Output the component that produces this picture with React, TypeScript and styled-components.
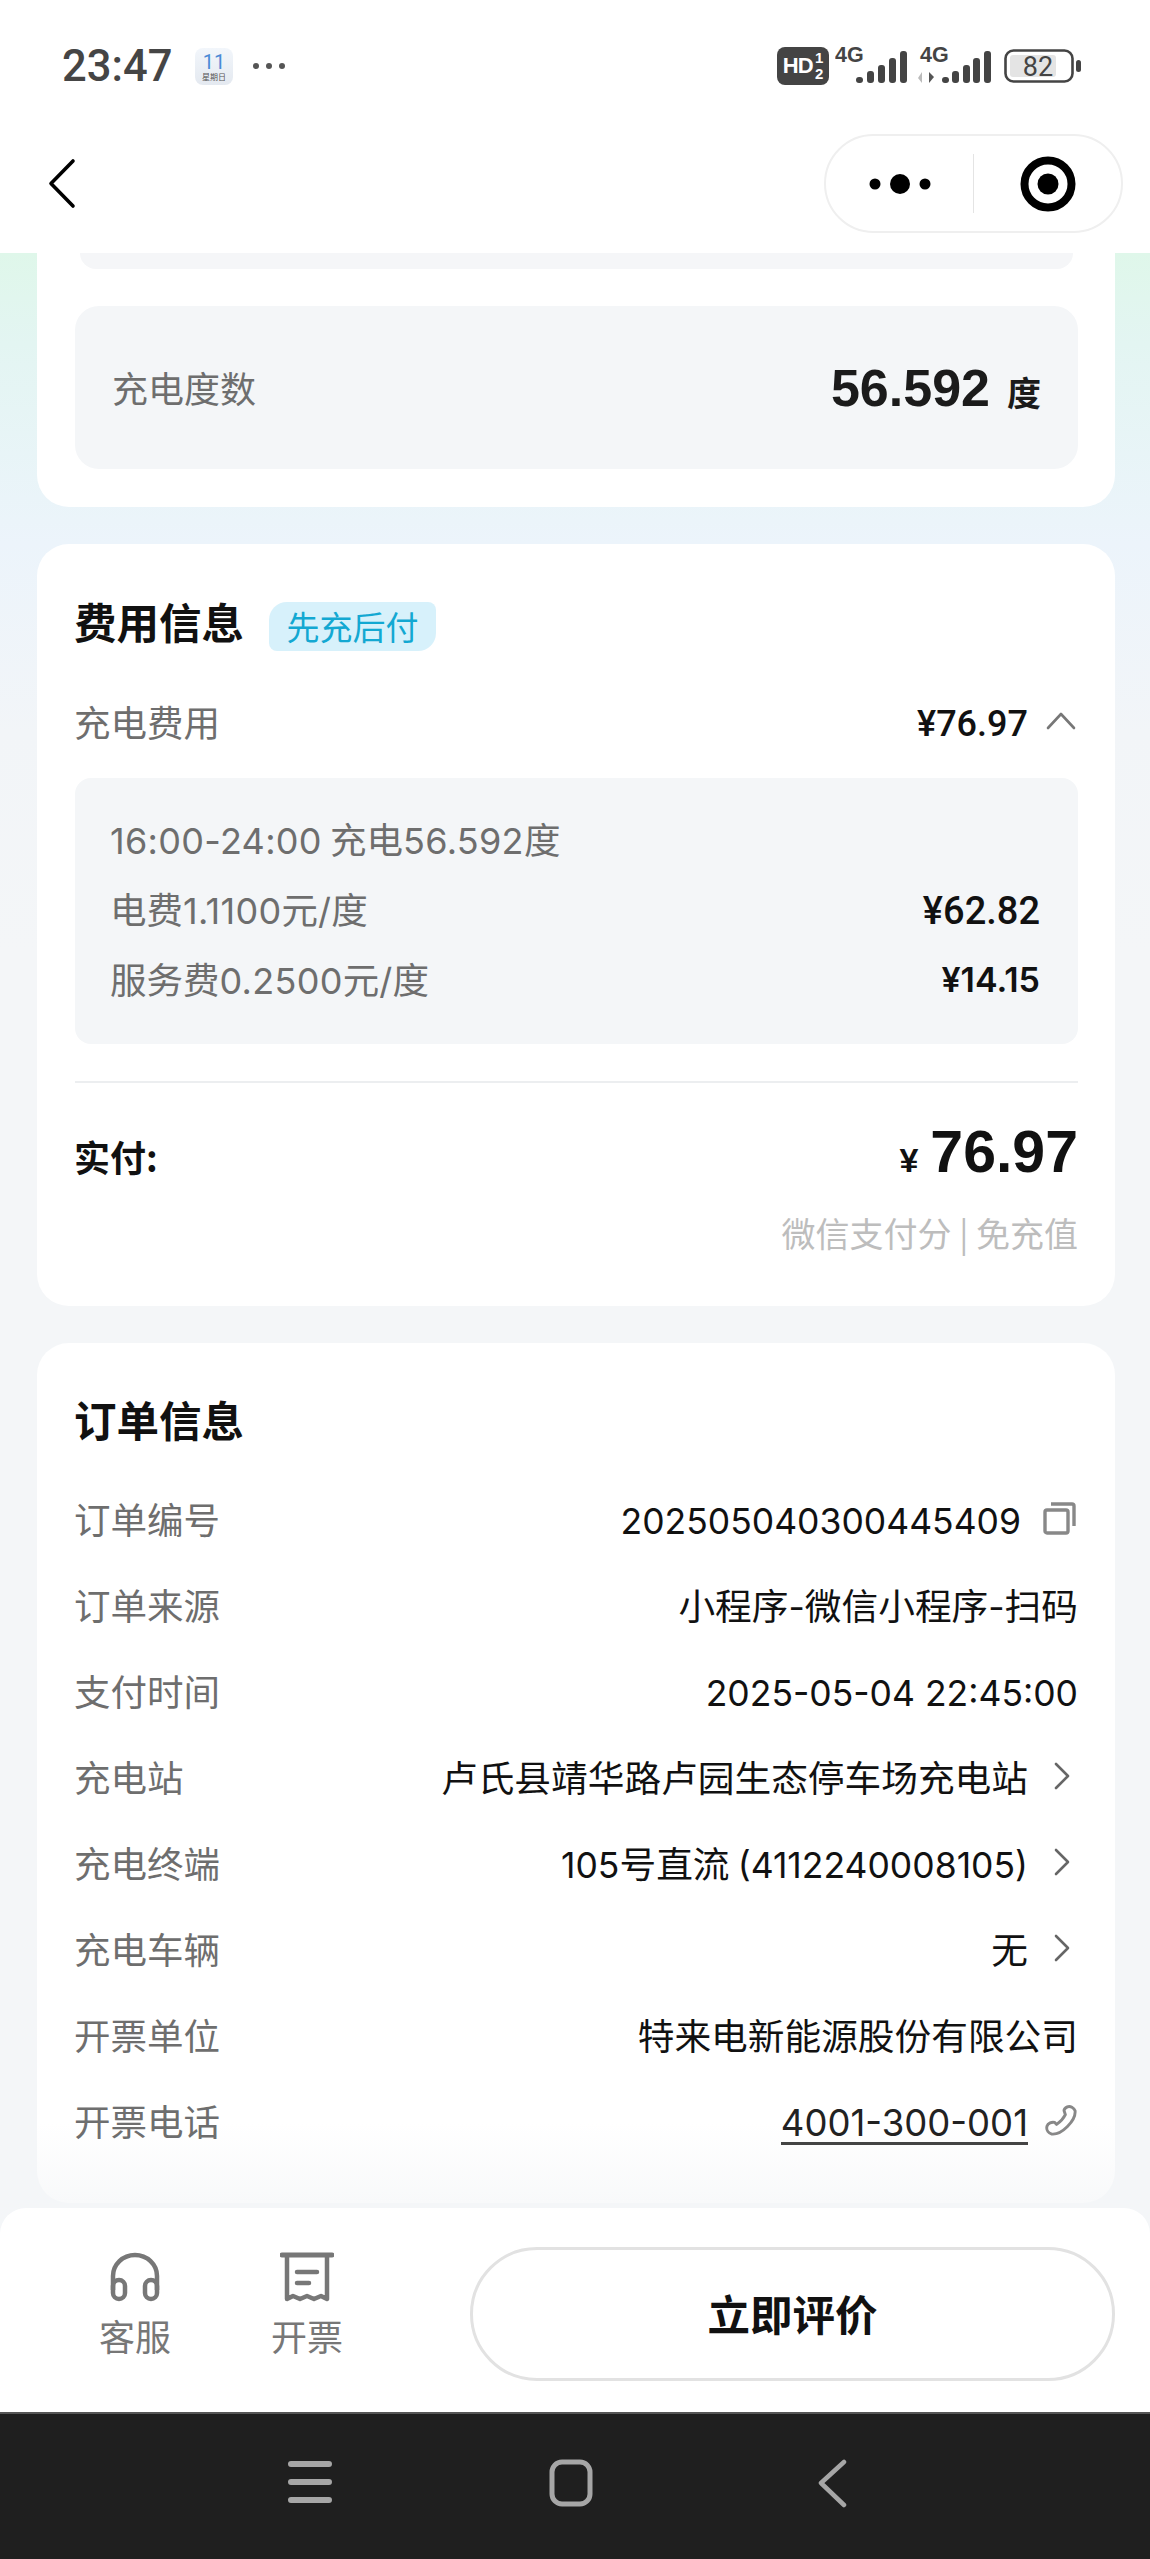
import React from "react";
import styled, { createGlobalStyle } from "styled-components";

const CJK = `"Noto Sans CJK SC", "Noto Sans", sans-serif`;
const NUM = `Inter, Roboto, "Noto Sans CJK SC", sans-serif`;
const MONEY = `Roboto, "Noto Sans CJK SC", sans-serif`;
const HEAVY = `"Liberation Sans", Roboto, "Noto Sans CJK SC", sans-serif`;

const Global = createGlobalStyle`
  html, body { margin: 0; padding: 0; background: #fff; }
  body { font-family: ${CJK}; color: #111; }
  * { box-sizing: border-box; }
`;

const Page = styled.div`
  width: 1150px;
  height: 2559px;
  display: flex;
  flex-direction: column;
  overflow: hidden;
`;

const Header = styled.header`
  height: 253px;
  flex: none;
  background: #fff;
`;

const StatusBar = styled.div`
  height: 132px;
  display: flex;
  align-items: center;
  padding: 0 69px 0 62px;
`;

const Time = styled.span`
  font-family: Roboto, sans-serif;
  font-weight: 500;
  font-size: 43.5px;
  color: #454545;
  width: 133px;
`;

const CalendarIcon = styled.div`
  width: 38px;
  height: 37px;
  border-radius: 8px;
  background: linear-gradient(180deg, #f2f6fb, #e4e9f0);
  display: flex;
  flex-direction: column;
  align-items: center;
  justify-content: center;
  line-height: 1;
`;

const CalendarDay = styled.span`
  font-family: Roboto, sans-serif;
  font-size: 20px;
  color: #4a8ad6;
`;

const CalendarWeek = styled.span`
  font-size: 8px;
  color: #555;
  margin-top: 1px;
`;

const MoreDots = styled.div`
  display: flex;
  gap: 7px;
  margin-left: 20px;
`;

const MoreDot = styled.i`
  width: 6px;
  height: 6px;
  border-radius: 50%;
  background: #555;
`;

const StatusRight = styled.div`
  margin-left: auto;
  display: flex;
  align-items: center;
`;

const SignalGap = styled.span<{ $w: number }>`
  width: ${(p) => p.$w}px;
`;

const HdBadge = styled.div`
  width: 52px;
  height: 38px;
  background: #444;
  border-radius: 8px;
  color: #fff;
  display: flex;
  align-items: center;
  justify-content: center;
  gap: 2px;
  font-family: "Liberation Sans", sans-serif;
  font-weight: 700;
`;

const HdText = styled.span`
  font-size: 22px;
  letter-spacing: -0.8px;
`;

const HdFraction = styled.span`
  display: flex;
  flex-direction: column;
  align-items: center;
  font-size: 15px;
  line-height: 16px;
`;

const NavBar = styled.div`
  height: 121px;
  display: flex;
  align-items: flex-start;
  padding: 2px 27px 0 47px;
  justify-content: space-between;
`;

const BackButton = styled.svg`
  width: 30px;
  height: 51px;
  margin-top: 24px;
`;

const Capsule = styled.div`
  width: 299px;
  height: 99px;
  border: 2px solid #efefef;
  border-radius: 50px;
  display: flex;
  align-items: center;
`;

const CapsuleCell = styled.div`
  flex: 1;
  display: flex;
  justify-content: center;
  align-items: center;
`;

const CapsuleDivider = styled.div`
  width: 1px;
  height: 59px;
  background: #e4e4e4;
`;

const Scroll = styled.main`
  height: 1955px;
  flex: none;
  padding: 0 35px 0 37px;
  overflow: hidden;
  background: linear-gradient(180deg, #dff7ea 0, #e3f5f2 90px, #ecf4fb 290px, #f2f5f8 480px, #f4f6f8 700px);
  display: flex;
  flex-direction: column;
  gap: 37px;
`;

const Card = styled.section<{ $flat?: boolean; $fade?: boolean }>`
  border-radius: ${(p) => (p.$flat ? "0 0 32px 32px" : "32px")};
  background: ${(p) =>
    p.$fade ? "linear-gradient(180deg, #fff 0, #fff 780px, #f8f9fa 100%)" : "#fff"};
  padding: 0 37px 0 38px;
  flex: none;
`;

const StubBox = styled.div`
  height: 16px;
  margin: 0 5px;
  border-radius: 0 0 26px 26px;
  background: #f5f6f8;
`;

const EnergyBox = styled.div`
  height: 163px;
  margin: 37px 0 38px;
  border-radius: 24px;
  background: #f4f6f8;
  padding: 0 37px;
  display: flex;
  align-items: center;
  justify-content: space-between;
`;

const EnergyLabel = styled.span`
  font-size: 36px;
  color: #6e6e6e;
  margin-top: -2px;
`;

const EnergyValue = styled.span`
  font-family: ${HEAVY};
  font-size: 52px;
  font-weight: 700;
  color: #1b1b1b;
  display: flex;
  align-items: baseline;
  gap: 17px;
`;

const EnergyUnit = styled.span`
  font-family: ${CJK};
  font-size: 34px;
  font-weight: 700;
`;

const TitleRow = styled.div<{ $top: number }>`
  height: 52px;
  margin-top: ${(p) => p.$top}px;
  display: flex;
  align-items: center;
  gap: 25px;
`;

const Title = styled.h2<{ $lift: number }>`
  margin: 0 0 0 -1px;
  font-size: 42.5px;
  font-weight: 700;
  line-height: 52px;
  color: #111;
  transform: translateY(${(p) => -p.$lift}px);
`;

const Tag = styled.span`
  width: 167px;
  height: 49px;
  border-radius: 18px 8px 18px 8px;
  background: #d7f1fb;
  color: #13a8d2;
  font-size: 33px;
  line-height: 49px;
  text-align: center;
`;

const Row = styled.div<{ $h?: number; $top?: number }>`
  height: ${(p) => p.$h ?? 86}px;
  margin-top: ${(p) => p.$top ?? 0}px;
  display: flex;
  align-items: center;
  justify-content: space-between;
`;

const Label = styled.span`
  font-size: 36.5px;
  color: #6e6e6e;
  white-space: nowrap;
  margin-left: -1px;
`;

const Value = styled.span`
  font-size: 36.7px;
  color: #111;
  white-space: nowrap;
`;

const Num = styled.span`
  font-family: ${NUM};
  font-size: 35.5px;
`;

const DetailNum = styled(Num)`
  font-size: 36px;
  letter-spacing: 0.3px;
`;

const PhoneNum = styled(Num)`
  font-size: 36.5px;
`;

const Money = styled.span`
  font-family: ${MONEY};
  font-size: 38px;
  font-weight: 500;
  color: #111;
  margin-top: 5px;
`;

const SummaryMoney = styled(Money)`
  font-size: 36px;
`;

const NarrowMoney = styled(Money)`
  font-family: ${NUM};
  font-size: 34px;
  font-weight: 600;
  margin-top: 3px;
`;

const Trailing = styled.span`
  display: flex;
  align-items: center;
`;

const IconSlot = styled.span<{ $w?: number }>`
  width: ${(p) => p.$w ?? 50}px;
  height: 40px;
  display: flex;
  align-items: center;
  justify-content: flex-end;
`;

const DetailBox = styled.div`
  height: 266px;
  margin-top: 14px;
  padding: 25px 38px 31px 36px;
  border-radius: 16px;
  background: #f4f6f8;
`;

const Separator = styled.hr`
  margin: 37px 0 0;
  border: 0;
  height: 2px;
  background: #eceef0;
`;

const PayRow = styled.div`
  height: 64px;
  margin-top: 37px;
  display: flex;
  align-items: baseline;
  justify-content: space-between;
  line-height: 64px;
`;

const PayLabel = styled.span`
  font-size: 36px;
  font-weight: 700;
  color: #111;
  margin-left: -1px;
`;

const PayAmount = styled.span`
  font-family: ${HEAVY};
  font-size: 59px;
  font-weight: 700;
  color: #111;
`;

const PayCurrency = styled.span`
  font-size: 34px;
  margin-right: 12px;
`;

const PayNote = styled.div`
  margin: 24px 0 48px;
  height: 50px;
  line-height: 50px;
  text-align: right;
  font-size: 34px;
  color: #bdbdbd;
`;

const Rows = styled.div`
  margin: 27px 0 40px;
`;

const PhoneLink = styled.span`
  border-bottom: 3px solid #444;
  line-height: 37px;
  display: inline-block;
  color: #222;
`;

const BottomBar = styled.footer`
  height: 204px;
  flex: none;
  background: #f4f6f8;
`;

const BottomInner = styled.div`
  height: 100%;
  background: #fff;
  border-radius: 26px 26px 0 0;
  display: flex;
  align-items: flex-start;
  padding: 44px 35px 0 75px;
  gap: 52px;
`;

const BarItem = styled.div`
  width: 120px;
  display: flex;
  flex-direction: column;
  align-items: center;
`;

const BarLabel = styled.span`
  font-size: 36px;
  line-height: 44px;
  margin-top: 11px;
  color: #777;
`;

const ActionButton = styled.button`
  margin: -5px 0 0 auto;
  width: 645px;
  height: 134px;
  border: 3px solid #e2e2e2;
  border-radius: 67px;
  background: #fff;
  font-family: ${CJK};
  font-size: 42.5px;
  font-weight: 700;
  color: #111;
  padding: 0 0 4px;
`;

const SystemNav = styled.nav`
  flex: 1;
  background: #1f1f1f;
  border-top: 2px solid #555;
  display: flex;
  align-items: flex-start;
  gap: 201px;
  padding: 45px 0 0 280px;
`;

const NavIcon = styled.svg`
  width: 60px;
  height: 50px;
`;

const Signal = ({ width, bars, label, arrows }: { width: number; bars: number[]; label: number; arrows?: boolean }) => {
  const tops = [30, 24, 18, 11, 4];
  return (
    <svg width={width} height="46" viewBox={`0 -4 ${width} 46`}>
      <text x={label} y="15" fontFamily="Liberation Sans, sans-serif" fontWeight="700" fontSize="21.5" fill="#444">
        4G
      </text>
      {bars.map((x, i) => (
        <rect key={x} x={x} y={tops[i]} width="7" height={36 - tops[i]} rx="3" fill="#444" />
      ))}
      {arrows && (
        <>
          <path d="M7 25v11l-4-5z" fill="#bbb" />
          <path d="M14 36V25l5 5z" fill="#555" />
        </>
      )}
    </svg>
  );
};

const Battery = () => (
  <svg width="77" height="34" viewBox="0 0 77 34">
    <rect x="1.500" y="1.500" width="67" height="31" rx="8" fill="none" stroke="#444" strokeWidth="2.6" />
    <rect x="6" y="6" width="46" height="22" rx="3" fill="#e4e4e4" />
    <text x="34" y="27" textAnchor="middle" fontFamily="Roboto, sans-serif" fontSize="27" fill="#444">
      82
    </text>
    <rect x="72" y="11" width="5" height="12" rx="2.5" fill="#444" />
  </svg>
);

const ChevronRight = () => (
  <svg width="24" height="30" viewBox="0 0 24 30" style={{ marginRight: 3 }}>
    <path d="M5 3l12 12L5 27" fill="none" stroke="#666" strokeWidth="2.6" strokeLinecap="round" strokeLinejoin="round" />
  </svg>
);

const ChevronUp = () => (
  <svg width="30" height="20" viewBox="0 0 30 20" style={{ marginRight: 2 }}>
    <path d="M2 17L15 3l13 14" fill="none" stroke="#777" strokeWidth="2.6" strokeLinecap="round" strokeLinejoin="round" />
  </svg>
);

const CopyIcon = () => (
  <svg width="33" height="33" viewBox="0 0 33 33" style={{ marginRight: 2 }}>
    <rect x="2" y="8" width="23" height="23" rx="2" fill="none" stroke="#888" strokeWidth="3.4" />
    <path d="M8 2h21a2 2 0 0 1 2 2v20" fill="none" stroke="#888" strokeWidth="3.4" />
  </svg>
);

const PhoneIcon = () => (
  <svg width="33" height="33" viewBox="0 0 34 34">
    <path
      d="M23 3c3-1.500 7 1 8 4 1 10-14 25-24 24-3-1-6-4-5-8 1-3 5-5 8-4l2 2c3-2 7-6 9-10l-1-3c-1-2 1-4 3-5z"
      fill="none"
      stroke="#888"
      strokeWidth="3"
      strokeLinejoin="round"
    />
  </svg>
);

const infoRows: { label: string; value: React.ReactNode; icon?: React.ReactNode; slot?: number }[] = [
  { label: "订单编号", value: <Num>202505040300445409</Num>, icon: <CopyIcon />, slot: 57 },
  {
    label: "订单来源",
    value: (
      <>
        小程序<Num>-</Num>微信小程序<Num>-</Num>扫码
      </>
    ),
  },
  { label: "支付时间", value: <Num>2025-05-04 22:45:00</Num> },
  { label: "充电站", value: "卢氏县靖华路卢园生态停车场充电站", icon: <ChevronRight /> },
  {
    label: "充电终端",
    value: (
      <>
        <Num>105</Num>号直流 <Num>(4112240008105)</Num>
      </>
    ),
    icon: <ChevronRight />,
  },
  { label: "充电车辆", value: "无", icon: <ChevronRight /> },
  { label: "开票单位", value: "特来电新能源股份有限公司" },
  {
    label: "开票电话",
    value: (
      <PhoneLink>
        <PhoneNum>4001-300-001</PhoneNum>
      </PhoneLink>
    ),
    icon: <PhoneIcon />,
  },
];

export default function App() {
  return (
    <Page>
      <Global />
      <Header>
        <StatusBar>
          <Time>23:47</Time>
          <CalendarIcon>
            <CalendarDay>11</CalendarDay>
            <CalendarWeek>星期日</CalendarWeek>
          </CalendarIcon>
          <MoreDots>
            <MoreDot />
            <MoreDot />
            <MoreDot />
          </MoreDots>
          <StatusRight>
            <HdBadge>
              <HdText>HD</HdText>
              <HdFraction>
                <span>1</span>
                <span>2</span>
              </HdFraction>
            </HdBadge>
            <SignalGap $w={6} />
            <Signal width={72} label={0} bars={[21, 32, 43, 54, 65]} />
            <SignalGap $w={8} />
            <Signal width={76} label={5} bars={[27, 37, 48, 58, 69]} arrows />
            <SignalGap $w={13} />
            <Battery />
          </StatusRight>
        </StatusBar>
        <NavBar>
          <BackButton viewBox="0 0 30 51">
            <path d="M26 3L4 25.500 26 48" fill="none" stroke="#000" strokeWidth="3.6" strokeLinecap="round" strokeLinejoin="round" />
          </BackButton>
          <Capsule>
            <CapsuleCell>
              <svg width="62" height="24" viewBox="0 0 62 24">
                <circle cx="6" cy="12" r="5.500" fill="#000" />
                <circle cx="31" cy="12" r="10" fill="#000" />
                <circle cx="56" cy="12" r="5.500" fill="#000" />
              </svg>
            </CapsuleCell>
            <CapsuleDivider />
            <CapsuleCell>
              <svg width="56" height="56" viewBox="0 0 56 56">
                <circle cx="28" cy="28" r="23.500" fill="none" stroke="#000" strokeWidth="8" />
                <circle cx="28" cy="28" r="10.500" fill="#000" />
              </svg>
            </CapsuleCell>
          </Capsule>
        </NavBar>
      </Header>

      <Scroll>
        <Card $flat>
          <StubBox />
          <EnergyBox>
            <EnergyLabel>充电度数</EnergyLabel>
            <EnergyValue>
              56.592
              <EnergyUnit>度</EnergyUnit>
            </EnergyValue>
          </EnergyBox>
        </Card>

        <Card>
          <TitleRow $top={56}>
            <Title $lift={5}>费用信息</Title>
            <Tag>先充后付</Tag>
          </TitleRow>
          <Row $top={26}>
            <Label>充电费用</Label>
            <Trailing>
              <SummaryMoney>¥76.97</SummaryMoney>
              <IconSlot>
                <ChevronUp />
              </IconSlot>
            </Trailing>
          </Row>
          <DetailBox>
            <Row $h={70}>
              <Label>
                <DetailNum>16:00-24:00</DetailNum> 充电<DetailNum>56.592</DetailNum>度
              </Label>
            </Row>
            <Row $h={70}>
              <Label>
                电费<DetailNum>1.1100</DetailNum>元<DetailNum>/</DetailNum>度
              </Label>
              <Money>¥62.82</Money>
            </Row>
            <Row $h={70}>
              <Label>
                服务费<DetailNum>0.2500</DetailNum>元<DetailNum>/</DetailNum>度
              </Label>
              <NarrowMoney>¥14.15</NarrowMoney>
            </Row>
          </DetailBox>
          <Separator />
          <PayRow>
            <PayLabel>实付:</PayLabel>
            <PayAmount>
              <PayCurrency>¥</PayCurrency>76.97
            </PayAmount>
          </PayRow>
          <PayNote>微信支付分 | 免充值</PayNote>
        </Card>

        <Card $fade>
          <TitleRow $top={53}>
            <Title $lift={3}>订单信息</Title>
          </TitleRow>
          <Rows>
            {infoRows.map((r) => (
              <Row key={r.label}>
                <Label>{r.label}</Label>
                <Trailing>
                  <Value>{r.value}</Value>
                  {r.icon && <IconSlot $w={r.slot}>{r.icon}</IconSlot>}
                </Trailing>
              </Row>
            ))}
          </Rows>
        </Card>
      </Scroll>

      <BottomBar>
        <BottomInner>
          <BarItem>
            <svg width="52" height="50" viewBox="0 0 52 50">
              <path d="M4 38V24a22 21 0 0 1 44 0v14" fill="none" stroke="#777" strokeWidth="4.500" />
              <rect x="4" y="28" width="12" height="19" rx="6" fill="none" stroke="#777" strokeWidth="4.500" />
              <rect x="36" y="28" width="12" height="19" rx="6" fill="none" stroke="#777" strokeWidth="4.500" />
            </svg>
            <BarLabel>客服</BarLabel>
          </BarItem>
          <BarItem>
            <svg width="54" height="50" viewBox="0 0 54 50">
              <path d="M2 3h50" stroke="#777" strokeWidth="5" strokeLinecap="round" />
              <path d="M7 4v43l6-3 7 3 7-3 7 3 7-3 6 3V4" fill="none" stroke="#777" strokeWidth="4.500" strokeLinejoin="round" />
              <path d="M17 20h20M17 31h12" stroke="#777" strokeWidth="4.500" strokeLinecap="round" />
            </svg>
            <BarLabel>开票</BarLabel>
          </BarItem>
          <ActionButton>立即评价</ActionButton>
        </BottomInner>
      </BottomBar>

      <SystemNav>
        <NavIcon viewBox="0 0 60 50">
          <path d="M11 5h38M11 23h38M11 41h38" stroke="#a6a6a6" strokeWidth="6" strokeLinecap="round" />
        </NavIcon>
        <NavIcon viewBox="0 0 60 50">
          <rect x="11" y="3" width="38" height="42" rx="10" fill="none" stroke="#a6a6a6" strokeWidth="5" />
        </NavIcon>
        <NavIcon viewBox="0 0 60 50">
          <path d="M42 3L19 24l23 22" fill="none" stroke="#a6a6a6" strokeWidth="4.500" strokeLinecap="round" strokeLinejoin="round" />
        </NavIcon>
      </SystemNav>
    </Page>
  );
}
